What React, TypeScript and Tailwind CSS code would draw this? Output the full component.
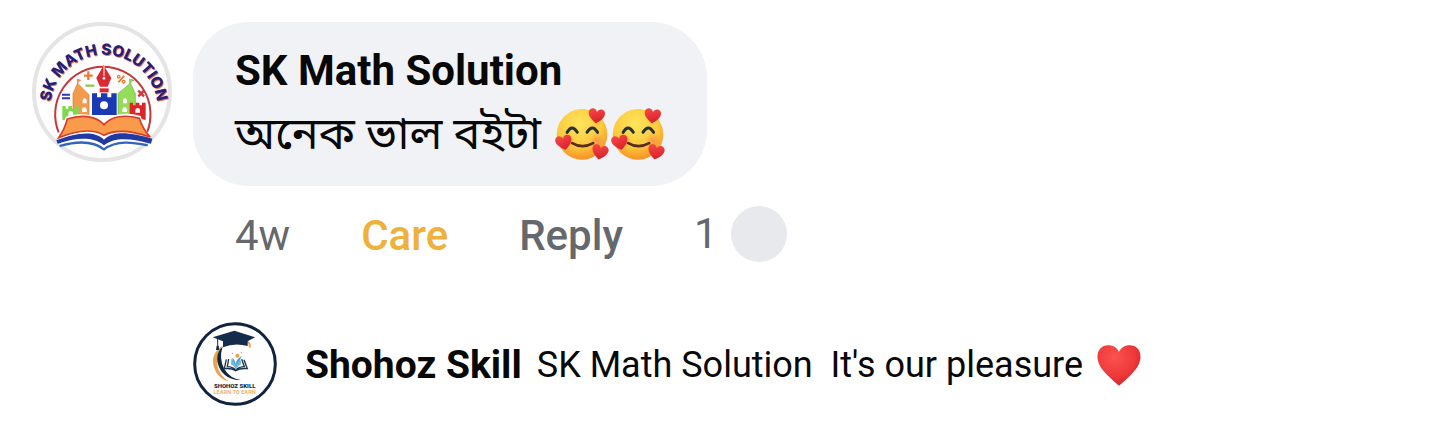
import React from "react";

function SkLogo() {
  return (
    <svg viewBox="21 21 420 420" className="size-[140px] shrink-0" role="img" aria-label="SK Math Solution profile picture">
      <circle cx="231" cy="231" r="204" fill="#fefefe" stroke="#e4e4e4" strokeWidth="12" />
      <path d="M101 352A143 143 0 1 1 366 352" fill="none" stroke="#c3383c" strokeWidth="6" />
      <path id="logo-arc" d="M78 311A161 161 0 1 1 394 311" fill="none" />
      <g fontFamily="Inter, 'Liberation Sans', sans-serif" fontWeight="800" fontSize="46">
        <text fill="#e8734a" transform="translate(3 3)">
          <textPath href="#logo-arc" startOffset="50%" textAnchor="middle">SK MATH SOLUTION</textPath>
        </text>
        <text fill="#24207c">
          <textPath href="#logo-arc" startOffset="50%" textAnchor="middle">SK MATH SOLUTION</textPath>
        </text>
      </g>
      <path d="M177 182h26M190 169v26" stroke="#ee7b35" strokeWidth="7" />
      <path d="M181 212h27" stroke="#8fca55" strokeWidth="7" />
      <path d="M111 239h24M111 250h24" stroke="#2b3aa8" strokeWidth="6" />
      <path d="M340 227l17 17M357 227l-17 17" stroke="#d4333a" strokeWidth="7" />
      <path d="M298 182l-18 20" stroke="#ee7b35" strokeWidth="5" />
      <circle cx="281" cy="185" r="4" fill="none" stroke="#ee7b35" strokeWidth="4" />
      <circle cx="296" cy="200" r="4" fill="none" stroke="#ee7b35" strokeWidth="4" />
      <path d="M144 302v-66l13-30v-14l10 4-8 4v6l33 33v63z" fill="#f39a4d" stroke="#db7a33" strokeWidth="2" />
      <path d="M279 302v-66l35-30v-14l13 4-10 4v6l14 30v66z" fill="#95dc58" stroke="#65b83a" strokeWidth="2" />
      <path d="M112 315v-42h10v8h8v-8h11v8h9v-8h11v42z" fill="#80d84e" />
      <path d="M314 304v-41h10v8h8v-8h11v8h8v-8h11v52z" fill="#df2429" />
      <path d="M201 300v-65h15v12h12v-12h19v12h12v-12h16v65z" fill="#1939b5" />
      <path d="M236 151l-22 38 11 26h23l11-26z" fill="#dc2830" />
      <path d="M224 220h27v12h-27z" fill="#dc2830" />
      <path d="M237 153v31" stroke="#fff" strokeWidth="3" />
      <circle cx="237" cy="190" r="4" fill="#fff" />
      <circle cx="237" cy="271" r="12" fill="#fff" />
      <path d="M173 265v-9a6 6 0 0 1 12 0v9zM294 265v-9a6 6 0 0 1 12 0v9zM171 291v-7a7 7 0 0 1 14 0v7zM292 291v-7a7 7 0 0 1 14 0v7zM130 302v-7a7 7 0 0 1 14 0v7zM331 293v-7a7 7 0 0 1 14 0v7z" fill="#fff" />
      <path d="M94 375Q112 350 122 305C170 290 215 298 237 324C260 296 305 290 347 303Q360 345 382 375Q290 340 237 372Q185 340 94 375z" fill="#fff" />
      <path d="M101 368Q118 345 127 312C172 297 215 304 237 329C260 303 300 298 343 310Q354 345 376 366Q285 335 237 361Q190 332 101 368z" fill="#f99b4a" stroke="#d63e2c" strokeWidth="5" />
      <path d="M94 376C145 357 205 343 237 374C268 343 325 355 382 371L378 386C325 374 275 362 237 391C200 362 150 370 98 386z" fill="#203aa2" />
      <path d="M104 393C150 380 200 374 237 403C275 374 325 382 368 391" fill="none" stroke="#3164bc" strokeWidth="7" />
    </svg>
  );
}

function ShohozLogo() {
  return (
    <svg viewBox="24 21 252 252" className="size-[84px] shrink-0" role="img" aria-label="Shohoz Skill profile picture">
      <circle cx="150" cy="147" r="121" fill="#fefefe" stroke="#10233f" strokeWidth="9" />
      <path d="M112 91Q68 125 93 171q13 22 37 28-29-20-33-48-4-34 15-60z" fill="#e9a34d" />
      <path d="M113 94Q86 122 103 158q19 38 65 37-33-4-50-33-17-29-5-68z" fill="#14263e" />
      <path d="M187 77q13 5 10 21l-6-1q2-11-6-15z" fill="#e9a34d" />
      <path d="M83 67l65-20 62 20-22 12v14q-39-11-74 4V79z" fill="#132c4c" />
      <path d="M98 72v22" stroke="#132c4c" strokeWidth="3" />
      <path d="M95 92h6l2 13H93z" fill="#132c4c" />
      <path d="M124 133l-6 28q22-2 34 6 12-8 35-6l-10-27M131 132l-4 23q16 0 25 10 10-10 26-10l-8-22" fill="none" stroke="#1d344d" strokeWidth="4" />
      <path d="M139 130l-1 18q10 4 14 16 7-12 17-17l-4-18-13 18z" fill="#78b8df" />
      <path d="M151 153q-1-19 20-31-8 18-20 31zM151 149q-10-10-9-21 9 7 9 21z" fill="#4da4d0" />
      <circle cx="157" cy="122" r="6" fill="#e9a34d" />
      <circle cx="143" cy="115" r="2" fill="#4da4d0" />
      <circle cx="169" cy="113" r="2" fill="#e9a34d" />
      <g textAnchor="middle" fontFamily="Roboto, sans-serif" fontWeight="900">
        <text x="149" y="218" fontSize="18" fill="#172943">SHOHOZ SKILL</text>
        <text x="149" y="238" fontSize="17" fontWeight="700" fill="#eeb36d">LEARN TO EARN</text>
      </g>
    </svg>
  );
}

function LoveFace() {
  return (
    <svg viewBox="28 22 160 160" className="size-[54px] shrink-0" role="img" aria-label="Smiling face with hearts">
      <defs>
        <radialGradient id="face" cx="0.45" cy="0.3" r="0.75">
          <stop offset="0" stopColor="#fde55c" />
          <stop offset="0.6" stopColor="#fcc83d" />
          <stop offset="1" stopColor="#f6861f" />
        </radialGradient>
        <radialGradient id="blush">
          <stop offset="0" stopColor="#f87950" stopOpacity="0.6" />
          <stop offset="1" stopColor="#f87950" stopOpacity="0" />
        </radialGradient>
        <linearGradient id="pink" x1="0" y1="0" x2="0.4" y2="1">
          <stop offset="0" stopColor="#fa4b49" />
          <stop offset="1" stopColor="#d9222c" />
        </linearGradient>
        <path id="small-heart" d="M0 22C-12 14-23 4-24-7-25-17-16-23-8-20-4-19-1-15 0-11 3-18 8-21 14-20 23-18 27-10 23-1 20 8 9 18 0 22z" />
      </defs>
      <circle cx="108" cy="103" r="75" fill="url(#face)" />
      <circle cx="152" cy="121" r="22" fill="url(#blush)" />
      <circle cx="65" cy="121" r="22" fill="url(#blush)" />
      <path d="M64 97q14-26 30 0M123 97q16-26 31 0" fill="none" stroke="#29312e" strokeWidth="9" strokeLinecap="round" />
      <path d="M79 129q30 18 62 0" fill="none" stroke="#572c1c" strokeWidth="8" strokeLinecap="round" />
      <use href="#small-heart" fill="url(#pink)" transform="translate(151 48) rotate(6)" />
      <use href="#small-heart" fill="url(#pink)" transform="translate(54 127) rotate(-12)" />
      <use href="#small-heart" fill="url(#pink)" transform="translate(161 155) rotate(12)" />
    </svg>
  );
}

function RedHeart() {
  return (
    <svg viewBox="50 32 130 122" className="h-[41px] w-[44px] shrink-0" role="img" aria-label="Red heart">
      <defs>
        <radialGradient id="heart" cx="0.4" cy="0.3" r="0.75">
          <stop offset="0" stopColor="#fb5250" />
          <stop offset="0.65" stopColor="#ee3738" />
          <stop offset="1" stopColor="#c6242c" />
        </radialGradient>
      </defs>
      <path d="M115 153Q98 139 80 121C63 104 51 87 51 67c0-20 13-34 32-34 15 0 27 8 32 20 5-12 17-20 32-20 19 0 32 14 32 34 0 20-12 37-29 54q-18 18-35 32z" fill="url(#heart)" />
    </svg>
  );
}

export default function App() {
  return (
    <main className="min-h-screen bg-white px-8 pt-[22px] font-['Roboto','Noto_Sans_Bengali','Noto_Sans',sans-serif] text-[#080809]">
      <article className="flex items-start gap-[21px]">
        <SkLogo />
        <div className="min-w-0">
          <div className="w-fit rounded-[56px] bg-[#f0f2f6] px-[42px] pt-[18px] pb-5">
            <h2 className="text-[42px] leading-[62px] font-bold">SK Math Solution</h2>
            <div className="flex h-16 items-center gap-[14px]">
              <p className="text-[45px] leading-[60px] whitespace-nowrap" lang="bn">অনেক ভাল বইটা</p>
              <span className="flex gap-[2px]">
                <LoveFace />
                <LoveFace />
              </span>
            </div>
          </div>
          <div className="mt-5 flex items-start gap-[71px] px-[42px] text-[42px] leading-[60px] text-[#65686c]">
            <time>4w</time>
            <button type="button" className="font-medium text-[#edb13c]">Care</button>
            <button type="button" className="font-medium">Reply</button>
            <div className="flex h-14 items-center gap-[13px]">
              <span>1</span>
              <span className="size-14 rounded-full bg-[#e7e9ed]" />
            </div>
          </div>
          <article className="mt-14 flex items-center gap-7 whitespace-nowrap">
            <ShohozLogo />
            <div className="flex items-center pt-[2px] text-[36px] leading-[56px]">
              <h3 className="mr-[15px] text-[39px] font-bold">Shohoz Skill</h3>
              <p className="mr-[14px] whitespace-pre">SK Math Solution  It's our pleasure</p>
              <RedHeart />
            </div>
          </article>
        </div>
      </article>
    </main>
  );
}
